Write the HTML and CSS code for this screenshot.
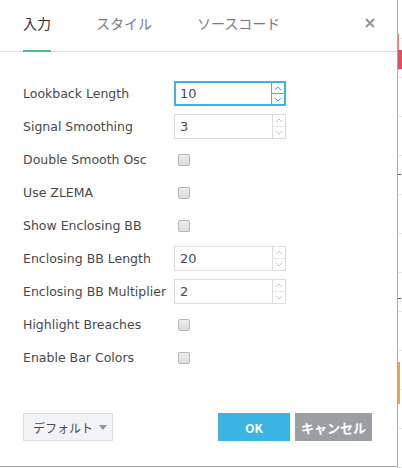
FILE: index.html
```html
<!DOCTYPE html>
<html lang="ja">
<head>
<meta charset="utf-8">
<link rel="stylesheet" href="styles.css">
</head>
<body>
<div class="page">
  <div class="dialog">
    <div class="header">
      <div class="tab active">入力</div>
      <div class="tab">スタイル</div>
      <div class="tab">ソースコード</div>
      <div class="close">
        <svg width="10" height="10" viewBox="0 0 10 10"><path d="M1 1L9 9M9 1L1 9" stroke="#8f949c" stroke-width="2"/></svg>
      </div>
    </div>
    <div class="body">
      <div class="row"><div class="label">Lookback Length</div><div class="num focus"><span class="val">10</span><span class="spin"><span class="up"><svg width="8" height="5" viewBox="0 0 8 5"><path d="M1 4L4 1L7 4" fill="none" stroke="currentColor"/></svg></span><span class="down"><svg width="8" height="5" viewBox="0 0 8 5"><path d="M1 1L4 4L7 1" fill="none" stroke="currentColor"/></svg></span></span></div></div>
      <div class="row"><div class="label">Signal Smoothing</div><div class="num"><span class="val">3</span><span class="spin"><span class="up"><svg width="8" height="5" viewBox="0 0 8 5"><path d="M1 4L4 1L7 4" fill="none" stroke="currentColor"/></svg></span><span class="down"><svg width="8" height="5" viewBox="0 0 8 5"><path d="M1 1L4 4L7 1" fill="none" stroke="currentColor"/></svg></span></span></div></div>
      <div class="row"><div class="label">Double Smooth Osc</div><div class="check"></div></div>
      <div class="row"><div class="label">Use ZLEMA</div><div class="check"></div></div>
      <div class="row"><div class="label">Show Enclosing BB</div><div class="check"></div></div>
      <div class="row"><div class="label">Enclosing BB Length</div><div class="num"><span class="val">20</span><span class="spin"><span class="up"><svg width="8" height="5" viewBox="0 0 8 5"><path d="M1 4L4 1L7 4" fill="none" stroke="currentColor"/></svg></span><span class="down"><svg width="8" height="5" viewBox="0 0 8 5"><path d="M1 1L4 4L7 1" fill="none" stroke="currentColor"/></svg></span></span></div></div>
      <div class="row"><div class="label">Enclosing BB Multiplier</div><div class="num"><span class="val">2</span><span class="spin"><span class="up"><svg width="8" height="5" viewBox="0 0 8 5"><path d="M1 4L4 1L7 4" fill="none" stroke="currentColor"/></svg></span><span class="down"><svg width="8" height="5" viewBox="0 0 8 5"><path d="M1 1L4 4L7 1" fill="none" stroke="currentColor"/></svg></span></span></div></div>
      <div class="row"><div class="label">Highlight Breaches</div><div class="check"></div></div>
      <div class="row"><div class="label">Enable Bar Colors</div><div class="check"></div></div>
    </div>
    <div class="footer">
      <div class="defaults">デフォルト<span class="caret"></span></div>
      <div class="actions">
        <div class="btn ok">OK</div>
        <div class="btn cancel">キャンセル</div>
      </div>
    </div>
  </div>
  <div class="chart">
    <div class="wick"></div>
    <div class="candle"></div>
    <div class="tick t1"></div>
    <div class="tick t2"></div>
    <div class="orange"></div>
  </div>
</div>
</body>
</html>
```
FILE: styles.css
```css
html, body {
  margin: 0;
  padding: 0;
  background: #fff;
}
.page {
  display: flex;
  width: 402px;
  height: 468px;
  overflow: hidden;
}
.dialog {
  width: 398px;
  height: 467px;
  flex: none;
  box-sizing: border-box;
  border-right: 1px solid #a9abae;
  border-bottom: 1px solid #a9abae;
  background: #fff;
  display: flex;
  flex-direction: column;
  font-family: "DejaVu Sans", "Noto Sans CJK JP", sans-serif;
}
.header {
  height: 52px;
  box-sizing: border-box;
  border-bottom: 1px solid #e0e0e0;
  display: flex;
  align-items: stretch;
  padding-left: 23px;
  padding-right: 22px;
}
.tab {
  font-family: "Noto Sans CJK JP", sans-serif;
  font-size: 14px;
  color: #787b80;
  display: flex;
  align-items: center;
  padding-bottom: 4px;
  margin-right: 45px;
  box-sizing: border-box;
  border-bottom: 2px solid transparent;
  margin-bottom: -1px;
}
.tab.active {
  color: #333;
  border-bottom-color: #53b987;
}
.close {
  margin-left: auto;
  display: flex;
  align-items: center;
  padding-bottom: 6px;
}
.body {
  padding: 29px 0 0 23px;
  display: flex;
  flex-direction: column;
  gap: 8px;
}
.row {
  height: 25px;
  display: flex;
  align-items: center;
}
.label {
  width: 151px;
  font-size: 12.5px;
  color: #484848;
}
.num {
  width: 112px;
  height: 25px;
  box-sizing: border-box;
  border: 1px solid #dadde0;
  display: flex;
  color: #c8cacd;
}
.num.focus {
  border: 2px solid #3bb3e4;
  color: #3bb3e4;
}
.val {
  flex: 1;
  font-size: 13px;
  color: #4a4a4a;
  padding-left: 5px;
  display: flex;
  align-items: center;
}
.num.focus .val {
  padding-left: 4px;
}
.spin {
  width: 12px;
  border-left: 1px solid #dadde0;
  display: flex;
  flex-direction: column;
}
.num.focus .spin {
  border-left-color: #3bb3e4;
}
.spin span {
  flex: 1;
  display: flex;
  align-items: center;
  justify-content: center;
}
.spin .up {
  border-bottom: 1px solid #e6e8ea;
}
.num.focus .spin .up {
  border-bottom-color: #3bb3e4;
}
.check {
  width: 12px;
  height: 12px;
  margin-left: 4px;
  box-sizing: border-box;
  border: 1px solid #b5b7ba;
  border-radius: 2px;
  background: linear-gradient(#ececec, #dcdcdc);
}
.footer {
  margin-top: auto;
  display: flex;
  align-items: center;
  padding: 0 25px 25px 23px;
}
.defaults {
  width: 90px;
  height: 28px;
  box-sizing: border-box;
  border: 1px solid #dadde0;
  background: #f1f3f6;
  font-family: "Noto Sans CJK JP", sans-serif;
  font-size: 12px;
  color: #4a4a4a;
  display: flex;
  align-items: center;
  padding-left: 9px;
  white-space: nowrap;
}
.caret {
  flex: none;
  width: 0;
  height: 0;
  border-left: 4px solid transparent;
  border-right: 4px solid transparent;
  border-top: 5px solid #8f949c;
  margin-left: 6px;
}
.actions {
  margin-left: auto;
  display: flex;
  gap: 5px;
}
.btn {
  height: 28px;
  display: flex;
  align-items: center;
  justify-content: center;
  font-family: "Noto Sans CJK JP", sans-serif;
  font-weight: bold;
  font-size: 12px;
  color: #fff;
}
.ok {
  width: 72px;
  background: #3bb3e4;
}
.cancel {
  width: 77px;
  background: #9b9ea3;
  font-size: 13px;
}
.chart {
  flex: 1;
  position: relative;
  background: #fff;
  background-image: repeating-linear-gradient(to bottom, transparent 0, transparent 38px, #e3e8ef 38px, #e3e8ef 39px);
}
.wick {
  position: absolute;
  left: 0;
  top: 34px;
  width: 1px;
  height: 36px;
  background: #ee7f8a;
}
.candle {
  position: absolute;
  left: 0;
  top: 50px;
  width: 4px;
  height: 19px;
  background: #e04f5f;
}
.tick {
  position: absolute;
  left: 0;
  width: 3px;
  height: 1px;
  background: #555;
}
.t1 { top: 174px; }
.t2 { top: 298px; }
.orange {
  position: absolute;
  left: 0;
  top: 362px;
  width: 2px;
  height: 42px;
  background: #f0a04b;
}
```
